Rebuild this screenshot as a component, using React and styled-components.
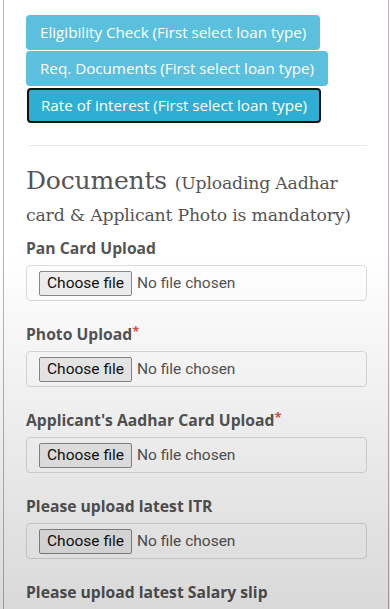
import React from 'react';
import styled, { createGlobalStyle } from 'styled-components';

const GlobalStyle = createGlobalStyle`
  html, body {
    margin: 0;
    padding: 0;
    background: #fff;
  }
  body {
    font-family: "Open Sans", "Liberation Sans", sans-serif;
    color: #555;
  }
`;

const Card = styled.div`
  margin: 0 1px 0 3px;
  height: 609px;
  overflow: hidden;
  border-left: 1px solid #c7aeb1;
  border-right: 1px solid #c7aeb1;
  padding: 15px 21px 0 22px;
  box-sizing: border-box;
`;

const ButtonStack = styled.div`
  display: flex;
  flex-direction: column;
  align-items: flex-start;
  gap: 1px;
`;

const InfoButton = styled.button`
  font-family: "Open Sans", sans-serif;
  font-size: 15.2px;
  line-height: 21px;
  color: #fff;
  background: ${p => (p.$focused ? '#2faed4' : '#5bc0de')};
  border: 2px solid ${p => (p.$focused ? '#111' : 'transparent')};
  border-radius: 4px;
  padding: 5px 12px;
  margin-left: ${p => (p.$focused ? '1px' : '0')};
  margin-top: ${p => (p.$focused ? '1px' : '0')};
  cursor: pointer;
`;

const Divider = styled.hr`
  border: none;
  border-top: 1px solid #eaeaea;
  margin: 22px 0 0 2px;
`;

const Heading = styled.h2`
  font-family: "DejaVu Serif", "Liberation Serif", serif;
  font-weight: normal;
  font-size: 25px;
  line-height: 30px;
  color: #555;
  margin: 20px 0 7px;
  letter-spacing: -0.2px;
`;

const HeadingNote = styled.small`
  font-size: 17.3px;
  letter-spacing: -0.2px;
`;

const Field = styled.div`
  display: flex;
  flex-direction: column;
  margin-bottom: 22px;
`;

const Label = styled.label`
  font-family: "Open Sans", sans-serif;
  font-weight: 700;
  font-size: 15.7px;
  line-height: 22px;
  color: #555;
  margin-bottom: 6px;
`;

const Required = styled.span`
  color: #d9534f;
  font-size: 13px;
  vertical-align: top;
  line-height: 16px;
`;

const FileBox = styled.div`
  display: flex;
  align-items: center;
  gap: 5px;
  height: 36px;
  box-sizing: border-box;
  border: 1px solid #ddd;
  border-radius: 4px;
  padding: 0 12px;
`;

const ChooseButton = styled.button`
  font-family: Roboto, "Liberation Sans", sans-serif;
  font-size: 15.5px;
  color: #111;
  background: #efefef;
  border: 1px solid #8a8a8a;
  border-radius: 2px;
  height: 25px;
  width: 93px;
  padding: 0;
`;

const NoFile = styled.span`
  font-family: Roboto, "Liberation Sans", sans-serif;
  font-size: 15.5px;
  color: #555;
`;

const Shade = styled.div`
  position: fixed;
  inset: 0;
  pointer-events: none;
  background: linear-gradient(to bottom, rgba(0,0,0,0) 0%, rgba(0,0,0,0) 42%, rgba(0,0,0,0.15) 100%);
`;

const fields = [
  { label: 'Pan Card Upload' },
  { label: 'Photo Upload', required: true },
  { label: "Applicant's Aadhar Card Upload", required: true },
  { label: 'Please upload latest ITR' },
  { label: 'Please upload latest Salary slip' },
];

export default function App() {
  return (
    <>
      <GlobalStyle />
      <Card>
        <ButtonStack>
          <InfoButton>Eligibility Check (First select loan type)</InfoButton>
          <InfoButton>Req. Documents (First select loan type)</InfoButton>
          <InfoButton $focused>Rate of interest (First select loan type)</InfoButton>
        </ButtonStack>
        <Divider />
        <Heading>
          Documents <HeadingNote>(Uploading Aadhar card &amp; Applicant Photo is mandatory)</HeadingNote>
        </Heading>
        {fields.map((f, i) => (
          <Field key={i}>
            <Label>
              {f.label}
              {f.required && <Required>*</Required>}
            </Label>
            <FileBox>
              <ChooseButton>Choose file</ChooseButton>
              <NoFile>No file chosen</NoFile>
            </FileBox>
          </Field>
        ))}
      </Card>
      <Shade />
    </>
  );
}
